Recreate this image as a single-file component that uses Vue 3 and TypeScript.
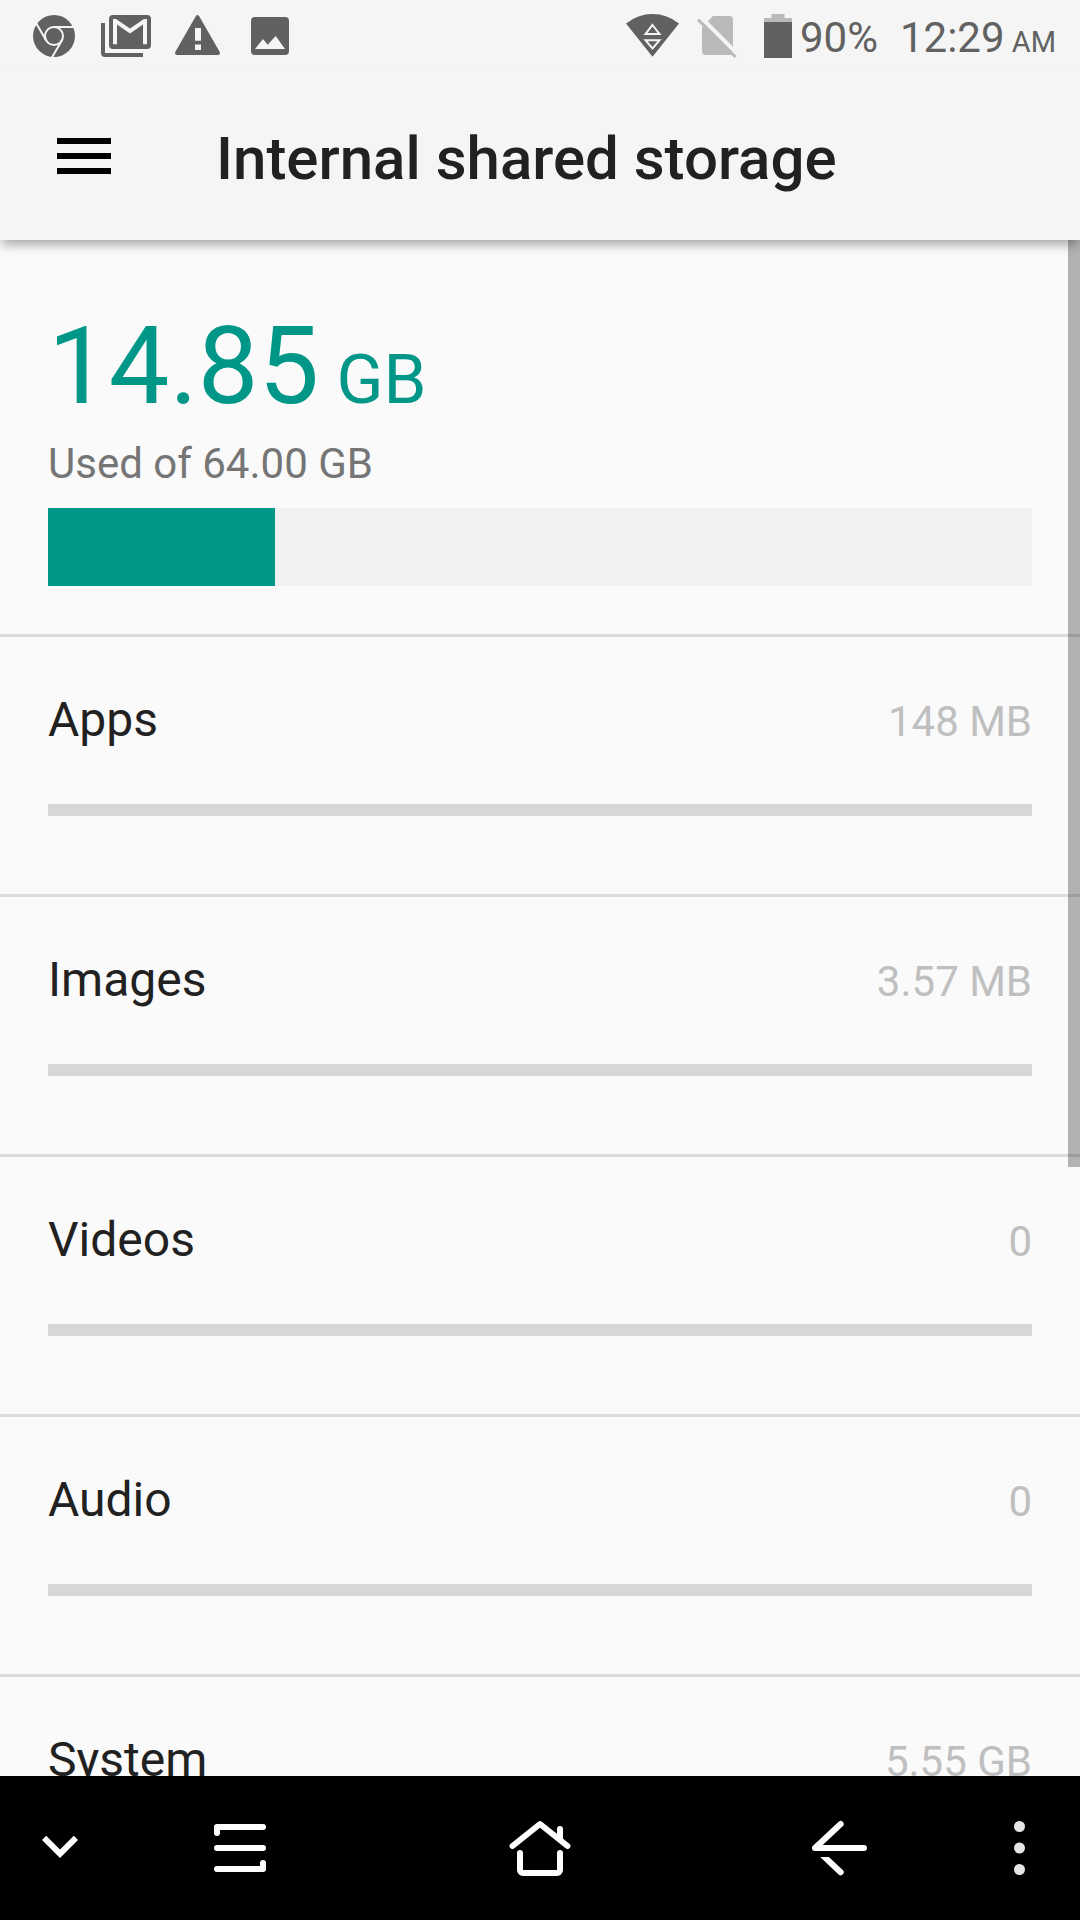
<script setup lang="ts">
interface Category {
  id: string
  name: string
  size: string
  share: number
}

const usedPercent = 23.07

const categories: Category[] = [
  { id: 'apps', name: 'Apps', size: '148 MB', share: 0 },
  { id: 'images', name: 'Images', size: '3.57 MB', share: 0 },
  { id: 'videos', name: 'Videos', size: '0', share: 0 },
  { id: 'audio', name: 'Audio', size: '0', share: 0 },
  { id: 'system', name: 'System', size: '5.55 GB', share: 0 },
]
</script>

<template>
  <div class="screen">
    <div class="status-bar">
      <div class="notifications">
        <svg class="icon" viewBox="0 0 72 72" aria-hidden="true">
          <circle cx="36" cy="36" r="21" />
          <g class="cut">
            <circle cx="36" cy="36" r="9" />
            <path d="M36 27H58" />
            <path d="M36 27H58" transform="rotate(120 36 36)" />
            <path d="M36 27H58" transform="rotate(240 36 36)" />
          </g>
        </svg>
        <svg class="icon" viewBox="0 0 72 72" aria-hidden="true">
          <path d="M11 23h4v30h38v4H15a4 4 0 0 1-4-4z" />
          <rect x="19" y="15" width="42" height="34" rx="4" />
          <path class="paper" d="M23 44.3V19h3L40 28.4 54 19h3v25.3h-4V24.6L40 33.6 27 24.6v19.7z" />
        </svg>
        <svg class="icon" viewBox="0 0 72 72" aria-hidden="true">
          <path class="rounded" d="M35.5 17.2 56 53H15z" />
          <path class="paper" d="M33 28h6v12.7h-6zM33 44.5h6V50h-6z" />
        </svg>
        <svg class="icon" viewBox="0 0 72 72" aria-hidden="true">
          <rect x="17" y="17" width="38" height="38" rx="4" />
          <path class="paper" d="M21 49 29 39l4.7 5.7 8-8.7L51 49z" />
        </svg>
      </div>
      <div class="system-state">
        <svg class="icon signal" viewBox="0 0 64 72" aria-hidden="true">
          <path d="M6 23.4A42.4 42.4 0 0 1 59 23.4L32.5 56.8z" />
          <path class="cut" d="M32.5 25 39.5 34h-14zM25.5 40.3h14l-7 8.2z" />
        </svg>
        <svg class="icon signal" viewBox="0 0 64 72" aria-hidden="true">
          <path class="faded" d="M29 16h16a4 4 0 0 1 4 4v31a4 4 0 0 1-4 4H22a4 4 0 0 1-4-4V27z" />
          <path class="strip" d="M15 15.5 54 54.5" />
          <path class="slash" d="M14 19.5 51.5 57" />
        </svg>
        <svg class="icon battery" viewBox="0 0 48 72" aria-hidden="true">
          <path class="faded" d="M23.5 14h13v4H44v4H16v-4h7.5z" />
          <path d="M16 22h28v36H16z" />
        </svg>
        <span class="charge">90%</span>
        <span class="clock">12:29<span class="meridiem"> AM</span></span>
      </div>
    </div>

    <header class="app-bar">
      <button class="menu" type="button" aria-label="Menu">
        <svg viewBox="0 0 72 72" aria-hidden="true">
          <path d="M9 18h54v6H9zM9 33h54v6H9zM9 48h54v6H9z" />
        </svg>
      </button>
      <h1>Internal shared storage</h1>
    </header>

    <div class="viewport">
      <main class="content">
        <section class="summary">
          <p class="used">14.85<span class="unit"> GB</span></p>
          <label class="total" for="used-bar">Used of 64.00 GB</label>
          <progress id="used-bar" class="used-bar" :value="usedPercent" max="100"></progress>
        </section>
        <ul class="categories">
          <li v-for="item in categories" :key="item.id" class="category">
            <div class="line">
              <label class="name" :for="item.id">{{ item.name }}</label>
              <span class="size">{{ item.size }}</span>
            </div>
            <progress :id="item.id" class="share-bar" :value="item.share" max="100"></progress>
          </li>
        </ul>
      </main>
      <div class="thumb"></div>
    </div>

    <nav class="nav-bar">
      <button type="button" aria-label="Hide navigation bar">
        <svg viewBox="0 0 72 72" aria-hidden="true">
          <path class="solid" d="M49.8 23.8 36 37.5 22.2 23.8 18 28l18 18 18-18z" />
        </svg>
      </button>
      <button type="button" aria-label="Recent apps">
        <svg viewBox="0 0 72 72" aria-hidden="true">
          <path d="M13 21v-6h46M13 36h46M13 57h46v-6" />
        </svg>
      </button>
      <button type="button" aria-label="Home">
        <svg viewBox="0 0 72 72" aria-hidden="true">
          <path d="M8.5 34 36 12l27.5 22M56 17v10M16 41v17a3 3 0 0 0 3 3h34a3 3 0 0 0 3-3V41" />
        </svg>
      </button>
      <button type="button" aria-label="Back">
        <svg viewBox="0 0 72 72" aria-hidden="true">
          <clipPath id="below-shaft"><path d="M0 45h72v27H0z" /></clipPath>
          <path d="M60 36H11L36.7 12" />
          <path clip-path="url(#below-shaft)" d="M11 36 36.7 60.3" />
        </svg>
      </button>
      <button type="button" aria-label="More options">
        <svg viewBox="0 0 72 72" aria-hidden="true">
          <g class="dots">
            <circle cx="35.5" cy="14.5" r="5.5" />
            <circle cx="35.5" cy="36" r="5.5" />
            <circle cx="35.5" cy="57.5" r="5.5" />
          </g>
        </svg>
      </button>
    </nav>
  </div>
</template>

<style>
body {
  margin: 0;
  background: #fafafa;
}
</style>

<style scoped>
.screen {
  display: flex;
  flex-direction: column;
  height: 100vh;
  background: #fafafa;
  color: #212121;
  font-family: Roboto, "Noto Sans", sans-serif;
}

button {
  padding: 0;
  border: 0;
  background: none;
}

.status-bar {
  display: flex;
  flex: none;
  justify-content: space-between;
  height: 72px;
  padding: 0 24px 0 18px;
  background: #f5f5f5;
  color: #616161;
}

.notifications,
.system-state {
  display: flex;
}

.icon {
  width: 72px;
  height: 72px;
  fill: #616161;
}

.signal {
  width: 64px;
}

.battery {
  width: 48px;
}

.cut {
  fill: none;
  stroke: #f5f5f5;
  stroke-width: 2;
}

.paper {
  fill: #f5f5f5;
}

.rounded {
  stroke: #616161;
  stroke-width: 4;
  stroke-linejoin: round;
}

.faded {
  fill: #bababa;
}

.strip {
  stroke: #f5f5f5;
  stroke-width: 4;
}

.slash {
  stroke: #bababa;
  stroke-width: 3;
}

.charge,
.clock {
  font-size: 42px;
  line-height: 76px;
  white-space: nowrap;
}

.charge {
  margin: 0 22px 0 4px;
}

.meridiem {
  font-size: 29px;
  line-height: 1;
}

.app-bar {
  position: relative;
  z-index: 1;
  display: flex;
  flex: none;
  align-items: center;
  gap: 96px;
  height: 168px;
  padding: 0 48px;
  box-sizing: border-box;
  background: #f5f5f5;
  box-shadow: 0 7px 10px -2px rgba(0, 0, 0, 0.32);
}

.menu,
.menu svg {
  display: block;
  width: 72px;
  height: 72px;
}

h1 {
  margin: 0;
  padding-top: 6px;
  font-size: 60px;
  font-weight: 500;
  line-height: 72px;
}

.viewport {
  position: relative;
  flex: 1;
  min-height: 0;
}

.content {
  height: 100%;
  overflow-y: auto;
  scrollbar-width: none;
}

.thumb {
  position: absolute;
  top: 0;
  right: 0;
  width: 12px;
  height: 60.35%;
  background: rgba(0, 0, 0, 0.285);
}

.summary {
  padding: 60px 48px 48px;
}

.used {
  margin: 0 0 8px;
  color: #009688;
  font-size: 108px;
  line-height: 132px;
}

.unit {
  font-size: 69px;
  line-height: 1;
}

.total {
  display: block;
  margin-bottom: 20px;
  color: #757575;
  font-size: 42px;
  line-height: 48px;
}

progress {
  display: block;
  width: 100%;
  border: 0;
  appearance: none;
}

.used-bar {
  height: 78px;
}

.used-bar::-webkit-progress-bar {
  background: #f1f1f1;
}

.used-bar::-webkit-progress-value {
  background: #009688;
}

.share-bar {
  height: 12px;
}

.share-bar::-webkit-progress-bar {
  background: #d7d7d7;
}

.share-bar::-webkit-progress-value {
  background: #009688;
}

.categories {
  margin: 0;
  padding: 0;
  list-style: none;
}

.category {
  padding: 55px 48px 78px;
  border-top: 3px solid #dcdcdc;
}

.line {
  display: flex;
  align-items: baseline;
  justify-content: space-between;
  margin-bottom: 56px;
}

.name {
  font-size: 48px;
  line-height: 56px;
}

.size {
  color: #bfbfbf;
  font-size: 42px;
  line-height: 48px;
}

.nav-bar {
  display: grid;
  flex: none;
  grid-template-columns: 1fr 2fr 3fr 2fr 1fr;
  height: 144px;
  background: #000;
}

.nav-bar button {
  display: flex;
  align-items: center;
  justify-content: center;
}

.nav-bar svg {
  width: 72px;
  height: 72px;
  fill: none;
  stroke: #fff;
  stroke-width: 6;
  stroke-linecap: round;
  stroke-linejoin: round;
}

.nav-bar .solid {
  fill: #fff;
  stroke: none;
}

.nav-bar .dots {
  fill: #e5e5e5;
  stroke: none;
}
</style>
